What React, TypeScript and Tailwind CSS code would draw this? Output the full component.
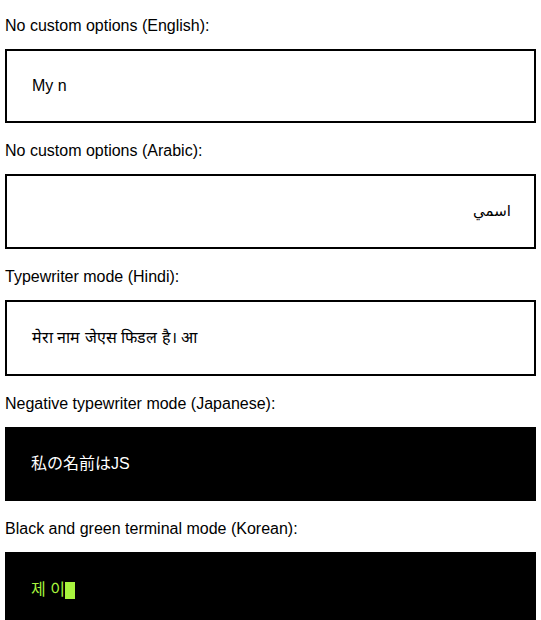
import React from 'react';

const font = { fontFamily: '"Liberation Sans", Arial, "Noto Sans CJK JP", "Noto Sans CJK KR", sans-serif' };

function Label({ first, children }: { first?: boolean; children: React.ReactNode }) {
  return (
    <p className={`${first ? 'mt-[17px]' : 'mt-[19px]'} mb-[14px] text-[16px] leading-[18px] text-black`}>
      {children}
    </p>
  );
}

export default function App() {
  return (
    <div className="min-h-screen bg-white px-[5px] pt-0 overflow-hidden" style={font}>
      <Label first>No custom options (English):</Label>
      <div className="h-[74px] border-2 border-black bg-white flex items-center px-[25px] text-[16px]">
        My n
      </div>

      <Label>No custom options (Arabic):</Label>
      <div
        dir="rtl"
        className="h-[75px] border-2 border-black bg-white flex items-center px-[23px] text-[15px]"
        style={{ fontFamily: '"DejaVu Sans", "Noto Sans", sans-serif' }}
      >
        اسمي
      </div>

      <Label>Typewriter mode (Hindi):</Label>
      <div className="h-[76px] border-2 border-black bg-white flex items-center px-[25px] text-[16px]">
        मेरा नाम जेएस फिडल है। आ
      </div>

      <Label>Negative typewriter mode (Japanese):</Label>
      <div className="h-[74px] bg-black text-white flex items-center px-[26px] text-[16px]">
        私の名前はJS
      </div>

      <Label>Black and green terminal mode (Korean):</Label>
      <div className="h-[76px] bg-black text-[#a8f53e] flex items-center px-[26px] text-[16px]">
        <span style={{ fontFamily: '"Liberation Sans", "Noto Sans CJK KR", sans-serif' }}>제 이</span>
        <span className="inline-block w-[10px] h-[17px] bg-[#a8f53e]" />
      </div>
    </div>
  );
}
